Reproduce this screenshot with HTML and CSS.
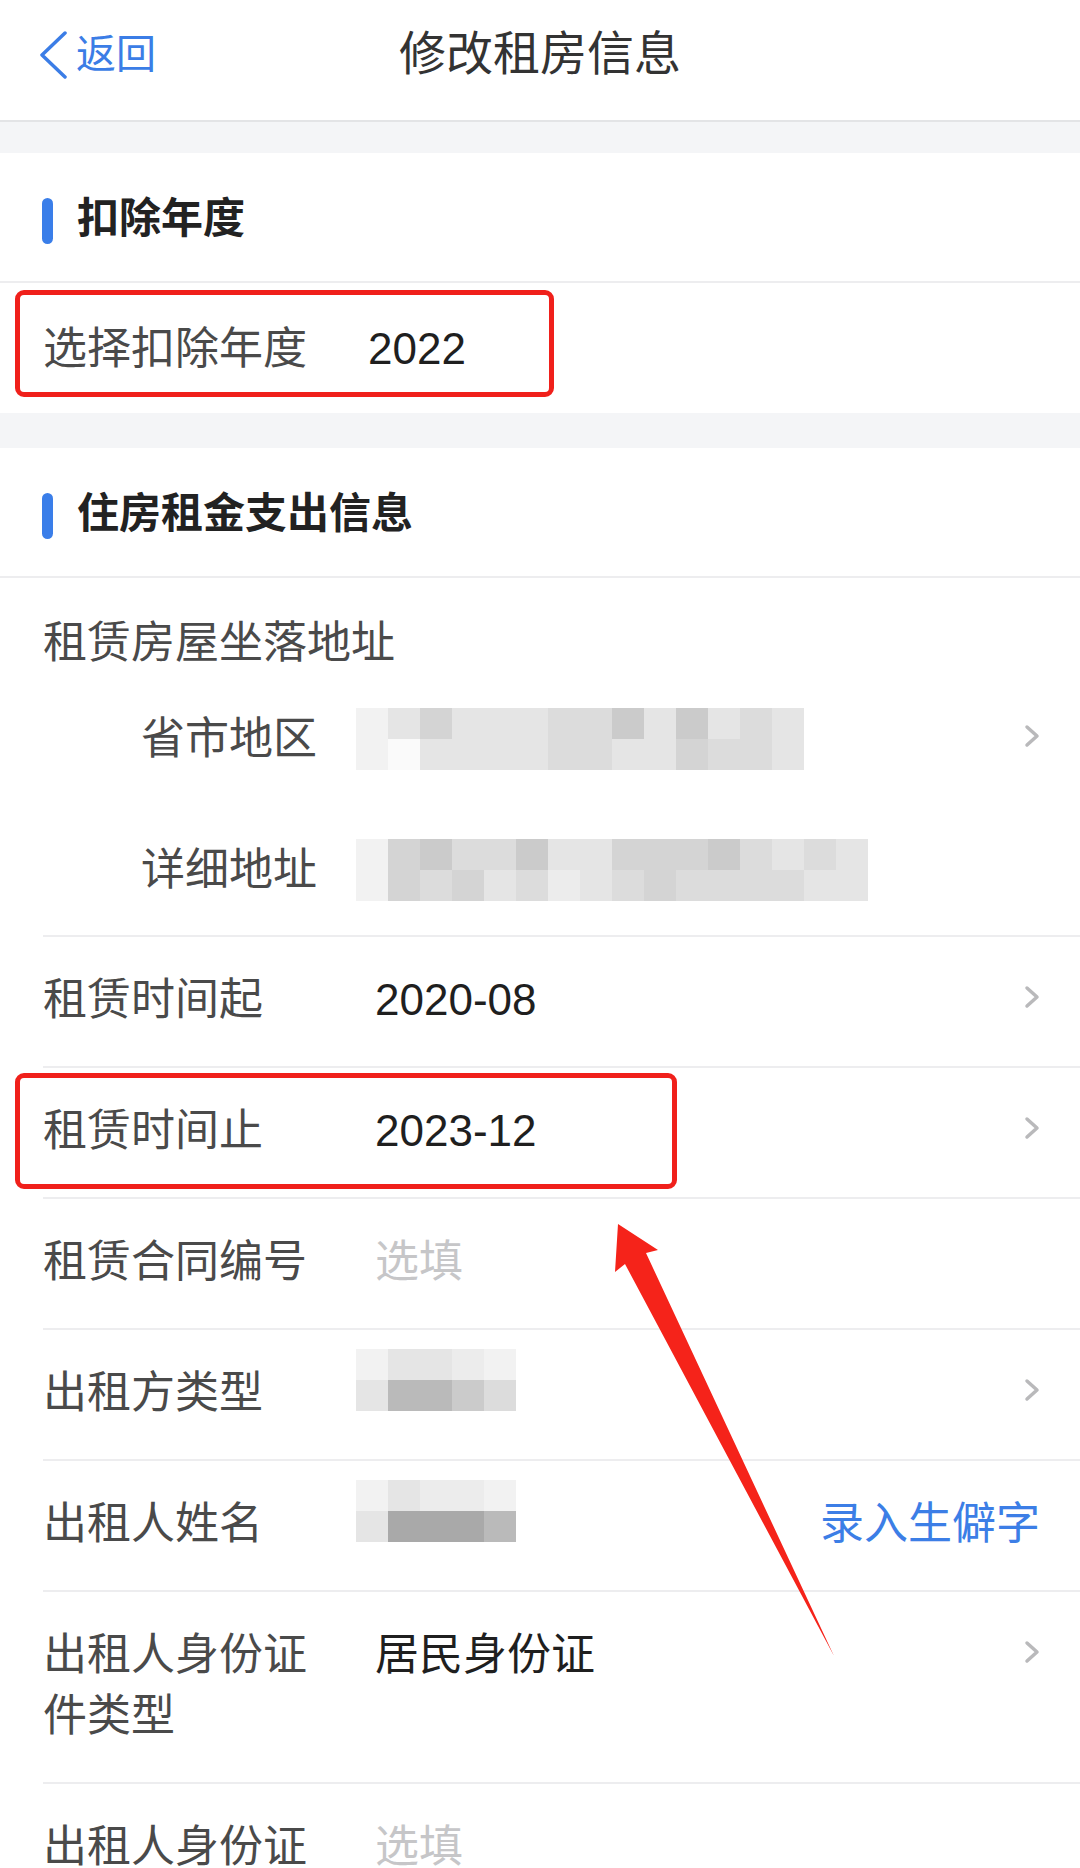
FILE: index.html
```html
<!DOCTYPE html>
<html lang="zh-CN">
<head>
<meta charset="utf-8">
<title>修改租房信息</title>
<link rel="stylesheet" href="styles.css">
</head>
<body>
<div class="page">
  <header class="nav">
    <div class="nav-back">
      <svg class="back-icon" viewBox="0 0 30 50"><polyline points="27,4 4,26 27,48"/></svg>
      <span>返回</span>
    </div>
    <div class="nav-title">修改租房信息</div>
    <div class="nav-side"></div>
  </header>

  <div class="gap gap-1"></div>

  <section class="card">
    <div class="sec-head"><i class="sec-bar"></i><span>扣除年度</span></div>
    <div class="row row-year mark mark-year">
      <div class="label">选择扣除年度</div>
      <div class="value">2022</div>
    </div>
  </section>

  <div class="gap gap-2"></div>

  <section class="card">
    <div class="sec-head"><i class="sec-bar"></i><span>住房租金支出信息</span></div>

    <div class="group">
      <div class="group-title">租赁房屋坐落地址</div>
      <div class="sub-row">
        <div class="sub-label">省市地区</div>
        <div class="sub-value">
          <div class="mosaic m14">
            <i class="a"></i><i class="c"></i><i class="e"></i><i class="c"></i><i class="c"></i><i class="c"></i><i class="d"></i><i class="d"></i><i class="f"></i><i class="c"></i><i class="f"></i><i class="c"></i><i class="d"></i><i class="c"></i>
            <i class="a"></i><i class="w"></i><i class="c"></i><i class="c"></i><i class="c"></i><i class="c"></i><i class="d"></i><i class="d"></i><i class="c"></i><i class="c"></i><i class="e"></i><i class="d"></i><i class="d"></i><i class="c"></i>
          </div>
        </div>
        <div class="chev"><svg viewBox="0 0 16 24"><polyline points="3,3 13,12 3,21"/></svg></div>
      </div>
      <div class="sub-row">
        <div class="sub-label">详细地址</div>
        <div class="sub-value">
          <div class="mosaic m16">
            <i class="a"></i><i class="e"></i><i class="f"></i><i class="d"></i><i class="d"></i><i class="f"></i><i class="c"></i><i class="c"></i><i class="e"></i><i class="e"></i><i class="e"></i><i class="f"></i><i class="d"></i><i class="c"></i><i class="d"></i><i class="c"></i>
            <i class="a"></i><i class="e"></i><i class="d"></i><i class="e"></i><i class="c"></i><i class="d"></i><i class="b"></i><i class="c"></i><i class="d"></i><i class="e"></i><i class="d"></i><i class="d"></i><i class="d"></i><i class="d"></i><i class="c"></i><i class="c"></i>
          </div>
        </div>
      </div>
    </div>

    <div class="row">
      <div class="label">租赁时间起</div>
      <div class="value">2020-08</div>
      <div class="chev"><svg viewBox="0 0 16 24"><polyline points="3,3 13,12 3,21"/></svg></div>
    </div>

    <div class="row mark mark-end">
      <div class="label">租赁时间止</div>
      <div class="value">2023-12</div>
      <div class="chev"><svg viewBox="0 0 16 24"><polyline points="3,3 13,12 3,21"/></svg></div>
    </div>

    <div class="row">
      <div class="label">租赁合同编号</div>
      <div class="value placeholder">选填</div>
    </div>

    <div class="row">
      <div class="label">出租方类型</div>
      <div class="value">
        <div class="mosaic m5 lift">
          <i class="a"></i><i class="c"></i><i class="c"></i><i class="b"></i><i class="a"></i>
          <i class="c"></i><i class="g"></i><i class="g"></i><i class="f"></i><i class="d"></i>
        </div>
      </div>
      <div class="chev"><svg viewBox="0 0 16 24"><polyline points="3,3 13,12 3,21"/></svg></div>
    </div>

    <div class="row">
      <div class="label">出租人姓名</div>
      <div class="value">
        <div class="mosaic m5 lift">
          <i class="a"></i><i class="c"></i><i class="b"></i><i class="b"></i><i class="a"></i>
          <i class="c"></i><i class="h"></i><i class="h"></i><i class="h"></i><i class="g"></i>
        </div>
      </div>
      <div class="link">录入生僻字</div>
    </div>

    <div class="row">
      <div class="label">出租人身份证件类型</div>
      <div class="value">居民身份证</div>
      <div class="chev"><svg viewBox="0 0 16 24"><polyline points="3,3 13,12 3,21"/></svg></div>
    </div>

    <div class="row">
      <div class="label">出租人身份证</div>
      <div class="value placeholder">选填</div>
    </div>
  </section>

  <svg class="arrow" viewBox="0 0 1080 1868">
    <polygon points="618,1224 658,1250 646,1253 834,1656 625,1264 615,1272"/>
  </svg>
</div>
</body>
</html>
```

FILE: styles.css
```css
html, body {
  margin: 0;
  padding: 0;
}

body {
  background: #f4f5f7;
  font-family: "Liberation Sans", "Noto Sans CJK SC", sans-serif;
}

.page {
  position: relative;
  width: 1080px;
  height: 1868px;
  overflow: hidden;
}

/* ---------- navigation bar ---------- */
.nav {
  height: 122px;
  box-sizing: border-box;
  background: #ffffff;
  border-bottom: 2px solid #e3e4e6;
  padding-bottom: 12px;
  display: grid;
  grid-template-columns: 1fr auto 1fr;
  align-items: center;
}

.nav-back {
  display: flex;
  align-items: center;
  padding-left: 38px;
  color: #3b7de6;
  font-size: 40px;
  line-height: 50px;
}

.back-icon {
  width: 30px;
  height: 50px;
  margin-right: 8px;
}

.back-icon polyline {
  fill: none;
  stroke: #3b7de6;
  stroke-width: 3.5;
  stroke-linecap: round;
  stroke-linejoin: round;
}

.nav-title {
  font-size: 47px;
  line-height: 60px;
  color: #333333;
}

/* ---------- gaps & cards ---------- */
.gap-1 { height: 31px; }
.gap-2 { height: 35px; }

.card {
  background: #ffffff;
}

.sec-head {
  height: 130px;
  box-sizing: border-box;
  border-bottom: 2px solid #ededef;
  display: flex;
  align-items: center;
  padding-left: 42px;
  padding-bottom: 6px;
  font-size: 42px;
  font-weight: 700;
  color: #222222;
}

.sec-bar {
  width: 11px;
  height: 46px;
  border-radius: 6px;
  background: #3a7ee9;
  margin-right: 24px;
  margin-top: 14px;
}

/* ---------- rows ---------- */
.row {
  position: relative;
  display: flex;
  align-items: flex-start;
  margin-left: 43px;
  padding: 32px 40px 36px 0;
  border-bottom: 2px solid #ededef;
  font-size: 44px;
  line-height: 61px;
}

.row-year {
  border-bottom: none;
  padding: 35px 40px 34px 0;
}

.label {
  flex: 0 0 288px;
  margin-right: 44px;
  color: #4a4a4a;
}

.row-year .label {
  flex-basis: 281px;
}

.value {
  flex: 1;
  color: #1f1f1f;
}

.placeholder {
  color: #c6c6c8;
}

.link {
  color: #3c7ee6;
}

.chev {
  flex: 0 0 16px;
  height: 61px;
  box-sizing: border-box;
  padding-bottom: 6px;
  display: flex;
  align-items: center;
}

.chev svg {
  width: 16px;
  height: 24px;
}

.chev polyline {
  fill: none;
  stroke: #b9b9bb;
  stroke-width: 3.5;
  stroke-linecap: round;
  stroke-linejoin: round;
}

/* ---------- address group ---------- */
.group {
  margin-left: 43px;
  padding-top: 34px;
  border-bottom: 2px solid #ededef;
  font-size: 44px;
}

.group-title {
  line-height: 61px;
  color: #4a4a4a;
}

.sub-row {
  display: flex;
  align-items: center;
  height: 131px;
  padding-left: 98px;
  padding-right: 40px;
}

.sub-label {
  flex: 0 0 215px;
  line-height: 61px;
  color: #4a4a4a;
}

.sub-value {
  flex: 1;
  display: flex;
  align-items: center;
}

/* ---------- mosaic (blurred private data) ---------- */
.mosaic {
  display: grid;
  grid-auto-rows: 31px;
}

.m14 { grid-template-columns: repeat(14, 32px); }
.m16 { grid-template-columns: repeat(16, 32px); }
.m5  { grid-template-columns: repeat(5, 32px); }

.lift {
  margin-top: -13px;
  margin-left: -19px;
  width: 160px;
}

.mosaic i { display: block; }
.mosaic .w { background: #fafafa; }
.mosaic .a { background: #f2f2f2; }
.mosaic .b { background: #ececec; }
.mosaic .c { background: #e5e5e5; }
.mosaic .d { background: #dcdcdc; }
.mosaic .e { background: #d4d4d4; }
.mosaic .f { background: #cbcbcb; }
.mosaic .g { background: #bababa; }
.mosaic .h { background: #a9a9a9; }

/* ---------- red annotations ---------- */
.mark::after {
  content: "";
  position: absolute;
  left: -28px;
  box-sizing: border-box;
  border: 5px solid #f0201b;
  border-radius: 9px;
}

.mark-year::after {
  top: 7px;
  width: 539px;
  height: 107px;
}

.mark-end::after {
  top: 5px;
  width: 662px;
  height: 116px;
}

.arrow {
  position: absolute;
  left: 0;
  top: 0;
  width: 1080px;
  height: 1868px;
  pointer-events: none;
}

.arrow polygon {
  fill: #f5231a;
}
```
